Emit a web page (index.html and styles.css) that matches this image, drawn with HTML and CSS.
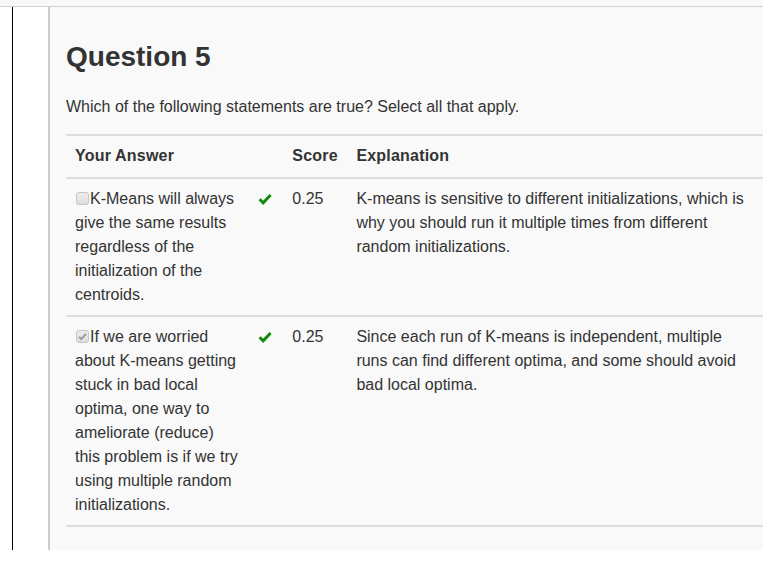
FILE: index.html
```html
<!DOCTYPE html>
<html>
<head>
<meta charset="utf-8">
<link rel="stylesheet" href="styles.css">
</head>
<body>
<div class="topbar"></div>
<div class="main">
  <div class="margin"></div>
  <div class="rule"></div>
  <div class="gutter"></div>
  <div class="panel">
    <h2 class="title">Question 5</h2>
    <p class="prompt">Which of the following statements are true? Select all that apply.</p>
    <table class="results">
      <thead>
        <tr>
          <th class="c-answer">Your Answer</th>
          <th class="c-icon"></th>
          <th class="c-score">Score</th>
          <th class="c-expl">Explanation</th>
        </tr>
      </thead>
      <tbody>
        <tr>
          <td class="c-answer"><span class="box"></span>K-Means will always give the same results regardless of the initialization of the centroids.</td>
          <td class="c-icon"><svg class="ok" viewBox="0 0 14 12"><path d="M1.6 6.2l3.6 3.6 7.4-7.8"/></svg></td>
          <td class="c-score">0.25</td>
          <td class="c-expl">K-means is sensitive to different initializations, which is why you should run it multiple times from different random initializations.</td>
        </tr>
        <tr>
          <td class="c-answer"><span class="box checked"><svg viewBox="0 0 12 12"><path d="M2.2 6.4l2.4 2.4 5.2-5.6" /></svg></span>If we are worried about K-means getting stuck in bad local optima, one way to ameliorate (reduce) this problem is if we try using multiple random initializations.</td>
          <td class="c-icon"><svg class="ok" viewBox="0 0 14 12"><path d="M1.6 6.2l3.6 3.6 7.4-7.8"/></svg></td>
          <td class="c-score">0.25</td>
          <td class="c-expl">Since each run of K-means is independent, multiple runs can find different optima, and some should avoid bad local optima.</td>
        </tr>
      </tbody>
    </table>
  </div>
</div>
</body>
</html>
```

FILE: styles.css
```css
html, body {
  margin: 0;
  padding: 0;
  background: #ffffff;
  overflow: hidden;
}
body {
  width: 763px;
  height: 569px;
  font-family: "Liberation Sans", Arial, sans-serif;
  color: #333333;
}
.topbar {
  height: 6px;
  background: #f9f9f9;
  border-bottom: 1px solid #d2d2d2;
}
.main {
  display: flex;
  height: 543px;
}
.margin {
  width: 12px;
  flex: none;
}
.rule {
  width: 1px;
  flex: none;
  background: #000000;
}
.gutter {
  width: 35px;
  flex: none;
}
.panel {
  flex: 1;
  min-width: 0;
  background: #f9f9f9;
  border-left: 2px solid #cccccc;
  padding: 34px 0 0 16px;
  overflow: hidden;
}
.title {
  margin: 0;
  font-size: 28px;
  line-height: 31px;
  font-weight: bold;
  color: #333333;
}
.prompt {
  margin: 23px 0 15px;
  font-size: 16px;
  line-height: 24px;
}
.results {
  border-collapse: collapse;
  table-layout: fixed;
  width: 697px;
  font-size: 16px;
  line-height: 24px;
}
.results th {
  text-align: left;
  font-weight: bold;
  letter-spacing: 0.2px;
  padding: 8px 8px 9px 9px;
  border-top: 2px solid #dddddd;
  border-bottom: 2px solid #dddddd;
}
.results td {
  vertical-align: top;
  padding: 8px 8px 8px 9px;
  border-bottom: 2px solid #dddddd;
}
.results .c-answer {
  width: 166px;
}
.results .c-icon {
  width: 16px;
  padding-left: 9px;
  padding-right: 8px;
}
.results .c-score {
  width: 47px;
  padding-left: 10px;
}
.results .c-expl {
  width: 398px;
  padding-left: 9px;
}
.ok {
  display: block;
  width: 14px;
  height: 12px;
  margin-top: 6px;
  fill: none;
  stroke: #118a11;
  stroke-width: 3;
  stroke-linejoin: miter;
}
.box {
  display: inline-block;
  box-sizing: border-box;
  width: 13px;
  height: 13px;
  margin: 0 1px 0 1px;
  vertical-align: -1px;
  border: 1px solid #c6c6c6;
  border-radius: 3px;
  background: linear-gradient(#ededed, #dedede);
}
.box svg {
  display: block;
  width: 11px;
  height: 11px;
  fill: none;
  stroke: #9a9a9a;
  stroke-width: 2.2;
}
```
